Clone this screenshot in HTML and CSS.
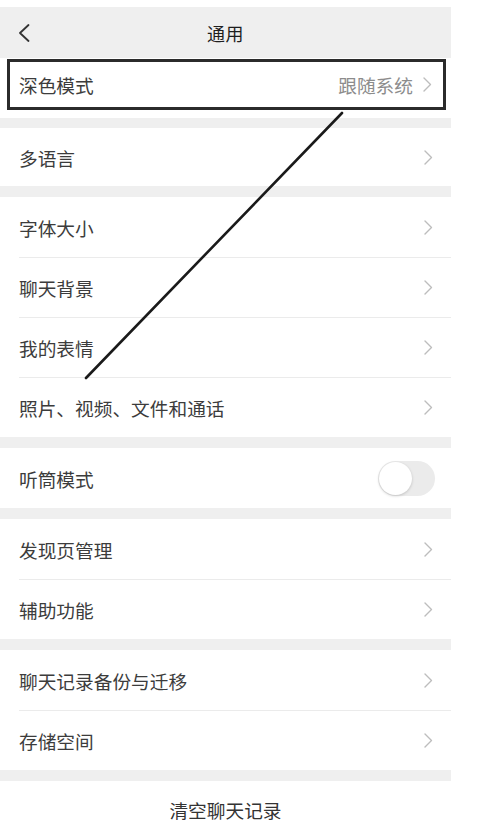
FILE: index.html
```html
<!DOCTYPE html>
<html lang="zh-CN">
<head>
<meta charset="utf-8">
<title>通用</title>
<link rel="stylesheet" href="styles.css">
</head>
<body>
<div class="page">
  <header class="nav">
    <svg class="back" width="12" height="18" viewBox="0 0 12 18"><path d="M10.5 1 L2 9 L10.5 17" fill="none" stroke="#333" stroke-width="1.8" stroke-linecap="round" stroke-linejoin="round"/></svg>
    <div class="title">通用</div>
  </header>

  <section class="dark-section">
    <div class="highlight">
      <span class="label">深色模式</span>
      <span class="value">跟随系统</span>
      <svg class="chev" width="9" height="15" viewBox="0 0 9 15"><path d="M1 1 L7.5 7.5 L1 14" fill="none" stroke="#bdbdbd" stroke-width="1.4" stroke-linecap="round" stroke-linejoin="round"/></svg>
    </div>
  </section>

  <section class="group">
    <div class="row short"><span class="label">多语言</span><svg class="chev" width="9" height="15" viewBox="0 0 9 15"><path d="M1 1 L7.5 7.5 L1 14" fill="none" stroke="#bdbdbd" stroke-width="1.4" stroke-linecap="round" stroke-linejoin="round"/></svg></div>
  </section>

  <section class="group">
    <div class="row"><span class="label">字体大小</span><svg class="chev" width="9" height="15" viewBox="0 0 9 15"><path d="M1 1 L7.5 7.5 L1 14" fill="none" stroke="#bdbdbd" stroke-width="1.4" stroke-linecap="round" stroke-linejoin="round"/></svg></div>
    <div class="row"><span class="label">聊天背景</span><svg class="chev" width="9" height="15" viewBox="0 0 9 15"><path d="M1 1 L7.5 7.5 L1 14" fill="none" stroke="#bdbdbd" stroke-width="1.4" stroke-linecap="round" stroke-linejoin="round"/></svg></div>
    <div class="row"><span class="label">我的表情</span><svg class="chev" width="9" height="15" viewBox="0 0 9 15"><path d="M1 1 L7.5 7.5 L1 14" fill="none" stroke="#bdbdbd" stroke-width="1.4" stroke-linecap="round" stroke-linejoin="round"/></svg></div>
    <div class="row"><span class="label">照片、视频、文件和通话</span><svg class="chev" width="9" height="15" viewBox="0 0 9 15"><path d="M1 1 L7.5 7.5 L1 14" fill="none" stroke="#bdbdbd" stroke-width="1.4" stroke-linecap="round" stroke-linejoin="round"/></svg></div>
  </section>

  <section class="group">
    <div class="row"><span class="label">听筒模式</span><span class="toggle"><span class="knob"></span></span></div>
  </section>

  <section class="group">
    <div class="row"><span class="label">发现页管理</span><svg class="chev" width="9" height="15" viewBox="0 0 9 15"><path d="M1 1 L7.5 7.5 L1 14" fill="none" stroke="#bdbdbd" stroke-width="1.4" stroke-linecap="round" stroke-linejoin="round"/></svg></div>
    <div class="row"><span class="label">辅助功能</span><svg class="chev" width="9" height="15" viewBox="0 0 9 15"><path d="M1 1 L7.5 7.5 L1 14" fill="none" stroke="#bdbdbd" stroke-width="1.4" stroke-linecap="round" stroke-linejoin="round"/></svg></div>
  </section>

  <section class="group">
    <div class="row"><span class="label">聊天记录备份与迁移</span><svg class="chev" width="9" height="15" viewBox="0 0 9 15"><path d="M1 1 L7.5 7.5 L1 14" fill="none" stroke="#bdbdbd" stroke-width="1.4" stroke-linecap="round" stroke-linejoin="round"/></svg></div>
    <div class="row"><span class="label">存储空间</span><svg class="chev" width="9" height="15" viewBox="0 0 9 15"><path d="M1 1 L7.5 7.5 L1 14" fill="none" stroke="#bdbdbd" stroke-width="1.4" stroke-linecap="round" stroke-linejoin="round"/></svg></div>
  </section>

  <section class="group">
    <div class="clear">清空聊天记录</div>
  </section>

  <svg class="annot" width="451" height="823" viewBox="0 0 451 823"><line x1="342" y1="113" x2="86" y2="378" stroke="#1a1a1a" stroke-width="2.6" stroke-linecap="round"/></svg>
</div>
</body>
</html>
```

FILE: styles.css
```css
* { box-sizing: border-box; }
html, body { margin: 0; padding: 0; background: #fff; }
body {
  font-family: "Noto Sans CJK SC", "Noto Sans", sans-serif;
  color: #3c3c3c;
  padding-top: 7px;
}
.page {
  position: relative;
  width: 451px;
  background: #efefef;
}
.nav {
  height: 51px;
  display: flex;
  align-items: center;
  justify-content: center;
  position: relative;
  background: #efefef;
}
.back {
  position: absolute;
  left: 18px;
  top: 17px;
}
.title {
  font-size: 18px;
  font-weight: 400;
  color: #1e1e1e;
  letter-spacing: 0.5px;
}
.dark-section {
  background: #fff;
  height: 60px;
  padding: 1px 5px 0 7px;
}
.highlight {
  height: 51px;
  border: 3px solid #2b2b2b;
  display: flex;
  align-items: center;
  padding: 0 11px 0 9px;
}
.label {
  font-size: 18.7px;
  color: #3c3c3c;
  flex: 1;
}
.value {
  font-size: 18.7px;
  color: #8c8c8c;
  margin-right: 10px;
}
.chev { display: block; flex: none; }
.group {
  background: #fff;
  margin-top: 11px;
}
.dark-section + .group { margin-top: 10px; }
.row {
  height: 60px;
  display: flex;
  align-items: center;
  padding: 0 18px 0 19px;
  position: relative;
}
.row.short { height: 58px; }
.row + .row::before {
  content: "";
  position: absolute;
  left: 19px;
  right: 0;
  top: 0;
  height: 1px;
  background: #ebebeb;
}
.toggle {
  width: 57px;
  height: 35px;
  border-radius: 18px;
  background: #ebebeb;
  position: relative;
  margin-right: -2px;
  flex: none;
}
.knob {
  position: absolute;
  left: 1px;
  top: 1px;
  width: 33px;
  height: 33px;
  border-radius: 50%;
  background: #fff;
  box-shadow: 0 1px 3px rgba(0,0,0,0.18);
}
.clear {
  height: 56px;
  display: flex;
  align-items: center;
  justify-content: center;
  font-size: 18.7px;
  color: #333;
}
.annot {
  position: absolute;
  left: 0;
  top: -7px;
  pointer-events: none;
}
```
